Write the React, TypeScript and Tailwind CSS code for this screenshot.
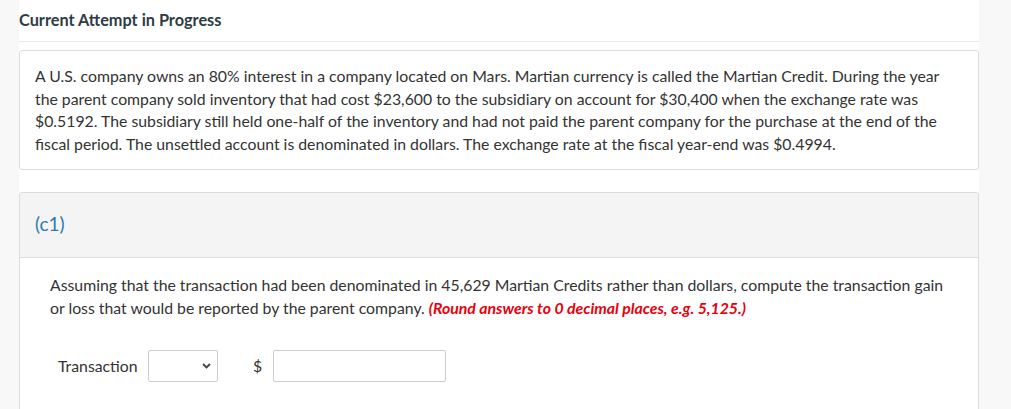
import React from 'react';

const App: React.FC = () => {
  return (
    <div className="flex min-h-[409px] bg-[#f8f8f8] font-['Lato',sans-serif] text-[#333]">
      <div className="w-[19px] shrink-0" />
      <div className="w-[960px] shrink-0 bg-white">
        <h1 className="h-[42px] border-b border-[#e8e8e8] pt-[9px] text-[16.3px] font-bold leading-[22px] text-[#2d3b45]">
          Current Attempt in Progress
        </h1>

        <div className="mt-[8px] rounded-[3px] border border-[#dcdcdc] px-[15px] py-[14px] text-[15.8px] leading-[22.5px]">
          A U.S. company owns an 80% interest in a company located on Mars. Martian currency is called the Martian
          Credit. During the year the parent company sold inventory that had cost $23,600 to the subsidiary on account
          for $30,400 when the exchange rate was $0.5192. The subsidiary still held one-half of the inventory and had not
          paid the parent company for the purchase at the end of the fiscal period. The unsettled account is
          denominated in dollars. The exchange rate at the fiscal year-end was $0.4994.
        </div>

        <div className="mt-[22px] rounded-t-[3px] border border-b-0 border-[#dcdcdc]">
          <div className="flex h-[65px] items-center border-b border-[#dcdcdc] bg-[#f4f4f4] px-[15px] pb-[2px]">
            <span className="text-[19px] text-[#2b7bb0]">(c1)</span>
          </div>
          <div className="pl-[30px] pr-[26px] pt-[16px] pb-[30px]">
            <p className="text-[15.8px] leading-[22.5px]">
              Assuming that the transaction had been denominated in 45,629 Martian Credits rather than dollars, compute
              the transaction gain or loss that would be reported by the parent company.{' '}
              <span className="font-bold italic text-[#e8000b]">
                (Round answers to 0 decimal places, e.g. 5,125.)
              </span>
            </p>
            <div className="mt-[31px] flex items-center pl-[8px] text-[15.8px]">
              <span className="w-[90px]">Transaction</span>
              <div className="relative h-[32px] w-[70px] rounded-[2px] border border-[#ccc] bg-white">
                <svg
                  className="absolute right-[6px] top-[12px]"
                  width="9"
                  height="6"
                  viewBox="0 0 9 6"
                  fill="none"
                >
                  <path d="M1 1l3.5 3.5L8 1" stroke="#444" strokeWidth="1.8" />
                </svg>
              </div>
              <span className="ml-[35px] w-[20px]">$</span>
              <div className="h-[32px] w-[173px] rounded-[2px] border border-[#ccc] bg-white" />
            </div>
          </div>
        </div>
      </div>
    </div>
  );
};

export default App;
